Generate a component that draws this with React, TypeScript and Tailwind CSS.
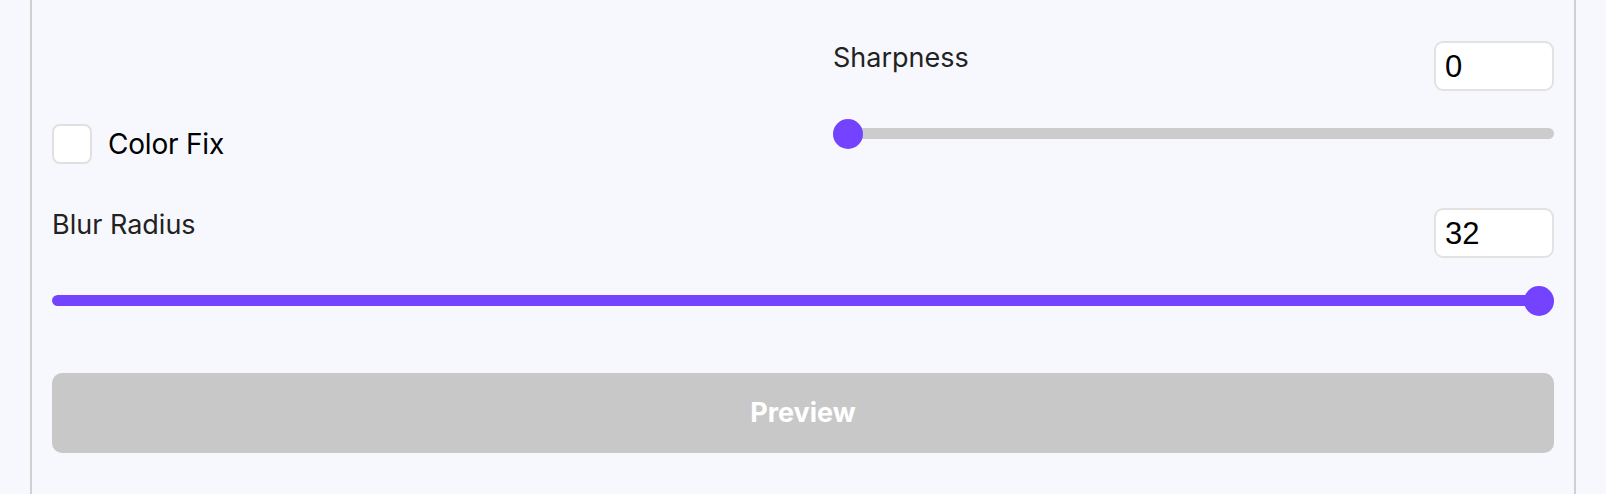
import { useState } from 'react'

function NumberBox({ value }: { value: number }) {
  return (
    <div className="w-[120px] h-[50px] rounded-[9px] border-2 border-[#e2e2e2] bg-white pl-[9px] flex items-center font-['Liberation_Sans',Arial,sans-serif] text-[31px] text-black leading-none">
      {value}
    </div>
  )
}

function Slider({ value, max }: { value: number; max: number }) {
  const pct = max === 0 ? 0 : value / max
  return (
    <div className="relative h-[30px] mt-[28px]">
      <div className="absolute left-0 right-0 top-[9px] h-[11px] rounded-full bg-[#cccccc] overflow-hidden">
        <div className="h-full rounded-full bg-[#7443ff]" style={{ width: `${pct * 100}%` }} />
      </div>
      {/* thumb sits over the track */}
      <div
        className="absolute top-0 h-[30px] w-[30px] rounded-full bg-[#7443ff]"
        style={{ left: `calc(${pct} * (100% - 30px))` }}
      />
    </div>
  )
}

function SliderField({ label, value, max }: { label: string; value: number; max: number }) {
  return (
    <div>
      <div className="flex items-start justify-between">
        <span className="text-[27px] leading-[34px] text-[#222222] font-['Inter',sans-serif]">{label}</span>
        <NumberBox value={value} />
      </div>
      <Slider value={value} max={max} />
    </div>
  )
}

export default function App() {
  const [colorFix, setColorFix] = useState(false)

  return (
    <div className="w-full h-[494px] bg-[#f7f8fd] px-[30px] overflow-hidden">
      <div className="h-full border-x-2 border-[#d0d0d0] px-[20px] pt-[41px]">
        <div className="grid grid-cols-2 gap-x-[60px]">
          <div className="pt-[82px]">
            <label className="flex items-center gap-[16px] h-[42px] cursor-pointer">
              <button
                type="button"
                onClick={() => setColorFix((v) => !v)}
                className="w-[40px] h-[40px] rounded-[8px] border-2 border-[#e0e0e0] bg-white"
              />
              <span className="text-[28px] leading-[42px] text-black font-['Inter',sans-serif] tracking-[-0.2px]">Color Fix</span>
            </label>
          </div>
          <SliderField label="Sharpness" value={0} max={10} />
        </div>

        <div className="mt-[43px]">
          <SliderField label="Blur Radius" value={32} max={32} />
        </div>

        <button
          type="button"
          disabled
          className="mt-[57px] w-full h-[80px] rounded-[10px] bg-[#c8c8c8] text-white text-[27px] font-bold font-['Inter',sans-serif]"
        >
          Preview
        </button>
      </div>
    </div>
  )
}
